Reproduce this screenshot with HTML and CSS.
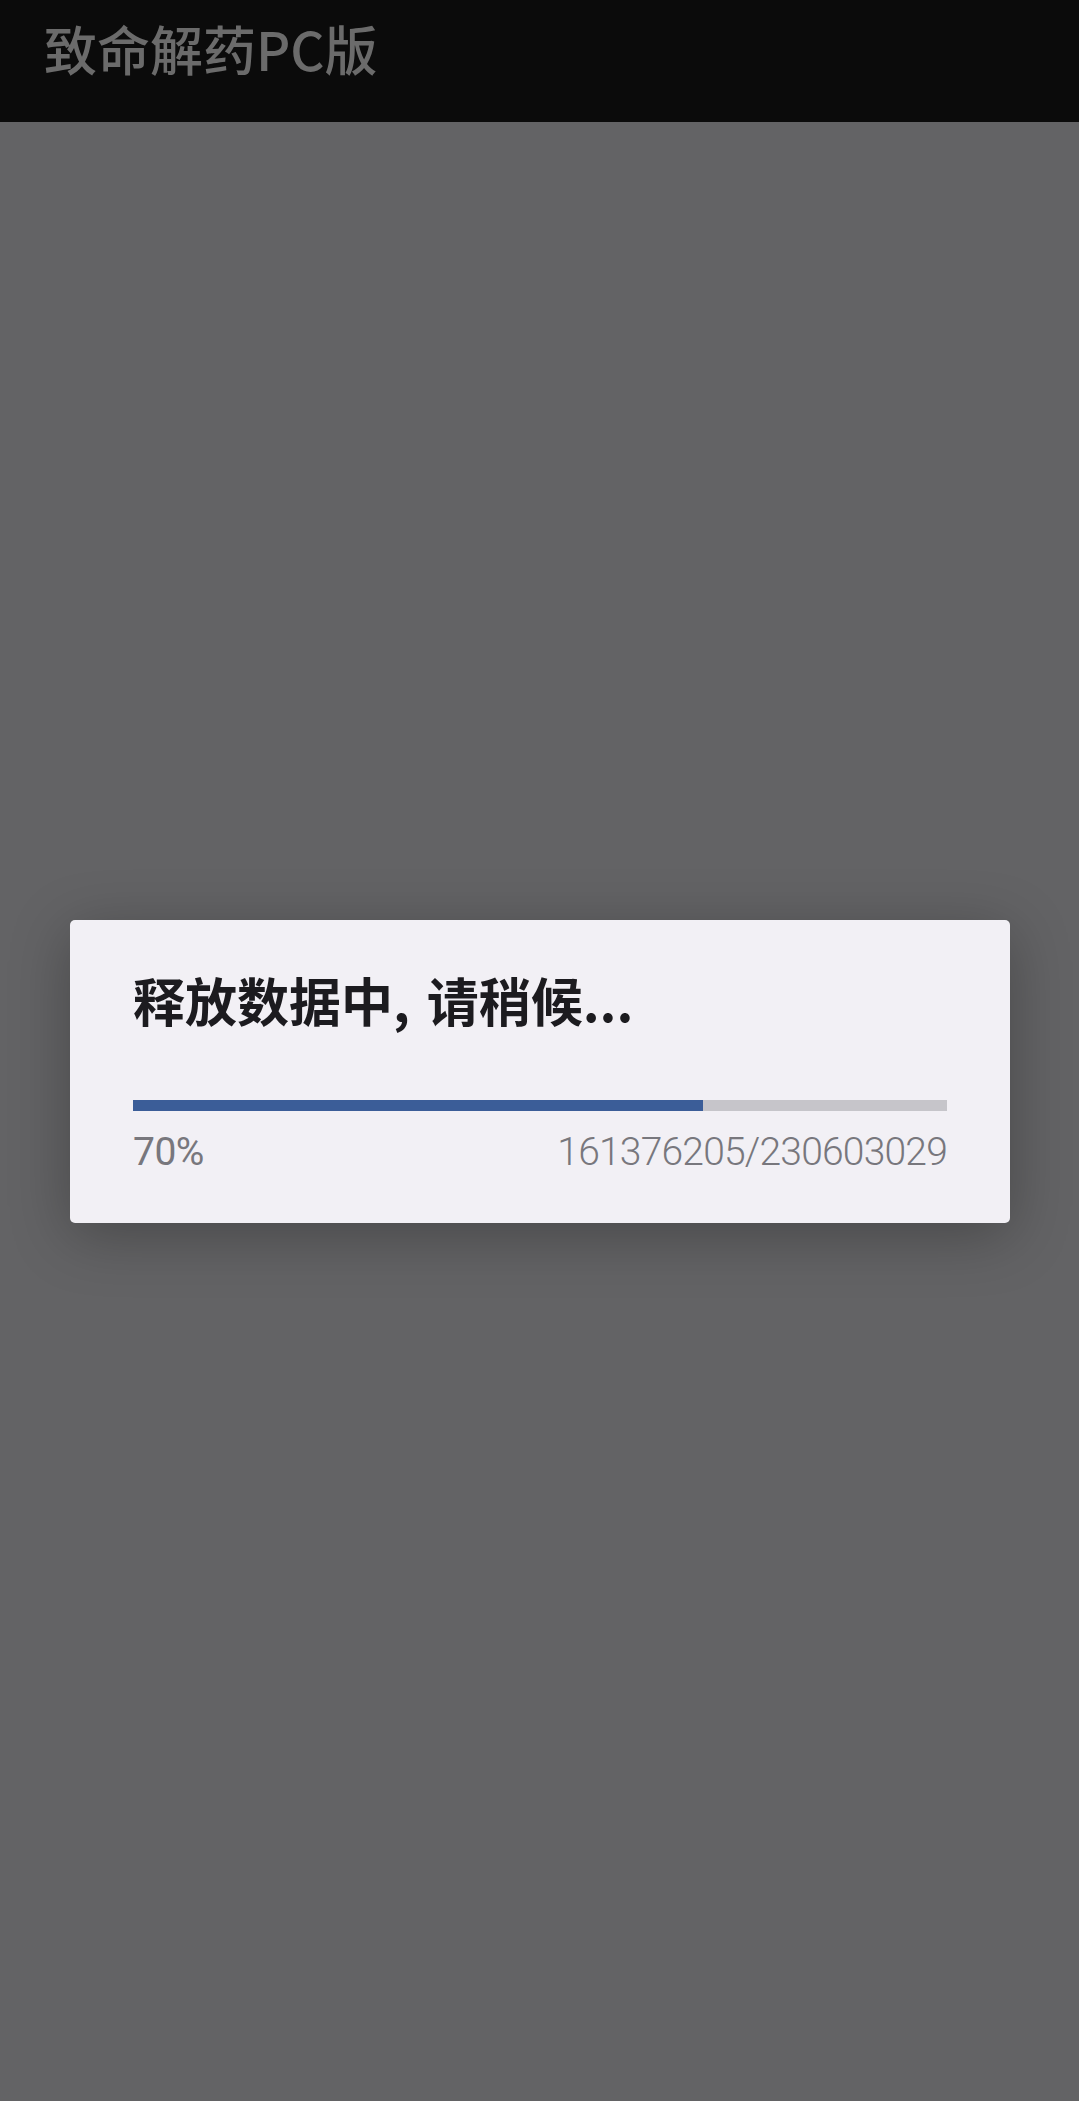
FILE: index.html
```html
<!DOCTYPE html>
<html lang="zh-CN">
<head>
<meta charset="utf-8">
<title>致命解药PC版</title>
<link rel="stylesheet" href="styles.css">
</head>
<body>
  <header class="appbar">
    <h1 class="appbar-title">致命解药PC版</h1>
  </header>
  <main class="content">
    <div class="dialog">
      <h2 class="dialog-title">释放数据中, 请稍候...</h2>
      <div class="progress">
        <div class="progress-fill" style="width: 70%"></div>
      </div>
      <div class="progress-info">
        <span class="percent">70%</span>
        <span class="count">161376205/230603029</span>
      </div>
    </div>
  </main>
</body>
</html>
```
FILE: styles.css
```css
html, body {
  margin: 0;
  padding: 0;
}
body {
  width: 1079px;
  height: 2101px;
  background: #636365;
  font-family: "Noto Sans CJK SC", "Noto Sans", sans-serif;
  overflow: hidden;
}
.appbar {
  height: 122px;
  background: #0b0b0b;
  box-sizing: border-box;
  padding: 22px 0 0 44px;
}
.appbar-title {
  margin: 0;
  font-size: 53px;
  line-height: 52px;
  font-weight: 500;
  color: #6b6b6b;
}
.content {
  padding-top: 798px;
}
.dialog {
  width: 940px;
  margin-left: 70px;
  box-sizing: border-box;
  padding: 44px 63px 48px 63px;
  background: #f2f0f5;
  border-radius: 5px;
  box-shadow: 0 12px 60px rgba(0, 0, 0, 0.28);
}
.dialog-title {
  margin: 0;
  font-size: 52px;
  line-height: 72px;
  font-weight: 700;
  word-spacing: 5px;
  color: #1c1b1f;
}
.progress {
  margin-top: 64px;
  height: 11px;
  background: #c6c5ca;
}
.progress-fill {
  height: 100%;
  background: #3b5d98;
}
.progress-info {
  margin-top: 18px;
  display: flex;
  justify-content: space-between;
  font-family: Roboto, "Noto Sans", sans-serif;
  font-size: 39px;
  line-height: 46px;
  color: #78777d;
}
.percent {
  font-weight: 400;
  letter-spacing: -0.5px;
}
.count {
  font-weight: 300;
  letter-spacing: -0.8px;
}
```
